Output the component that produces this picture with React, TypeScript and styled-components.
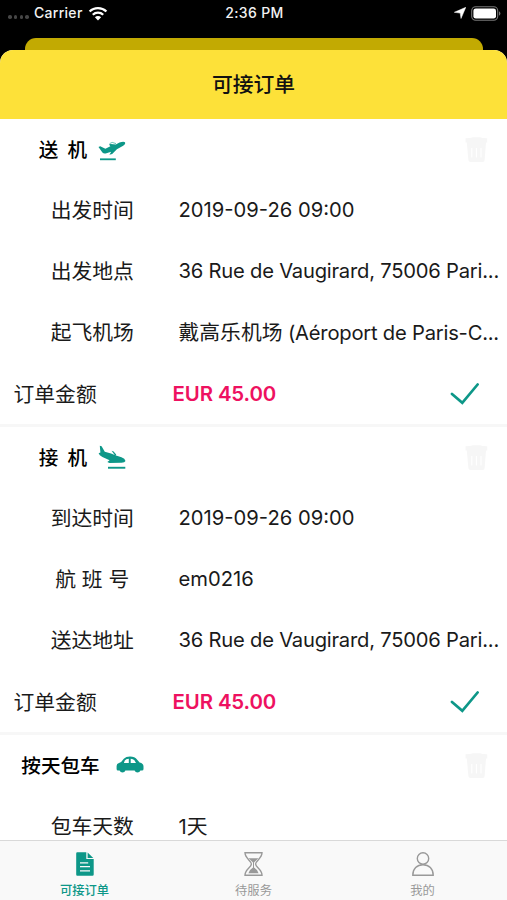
import React from 'react';
import styled, { createGlobalStyle } from 'styled-components';

const colors = {
  teal: '#0d9788',
  yellow: '#fde139',
  darkYellow: '#c2aa02',
  pink: '#ee1160',
  text: '#1a1a1a',
  gray: '#999999',
  divider: '#f7f7f7',
  trash: '#f6f6f6',
};

const GlobalStyle = createGlobalStyle`
    * {
        box-sizing: border-box;
    }

    body {
        margin: 0;
        background: #000;
        font-family: Inter, 'Noto Sans CJK SC', sans-serif;
        color: ${colors.text};
    }
`;

const Screen = styled.div`
    display: flex;
    flex-direction: column;
    width: 507px;
    height: 900px;
    overflow: hidden;
    background: #000;
`;

const StatusBar = styled.div`
    display: grid;
    grid-template-columns: 1fr auto 1fr;
    align-items: center;
    height: 38px;
    flex: none;
    padding: 0 6px 12px 8px;
    color: #f2f2f2;
    font-size: 14px;
    font-weight: 500;
    line-height: 26px;
`;

const StatusGroup = styled.div<{ $end?: boolean }>`
    display: flex;
    align-items: center;
    justify-content: ${props => props.$end ? 'flex-end' : 'flex-start'};
    gap: 5px;
`;

const Signal = styled.div`
    display: flex;
    gap: 2.2px;
    padding-top: 8px;
`;

const SignalDot = styled.i`
    width: 3.6px;
    height: 3.6px;
    border-radius: 50%;
    background: #464646;
`;

const StatusText = styled.span<{ $spacing: number }>`
    letter-spacing: ${props => props.$spacing}px;
`;

const BackCard = styled.div`
    flex: none;
    height: 12px;
    margin: 0 24px 0 25px;
    border-radius: 11px 11px 0 0;
    background: ${colors.darkYellow};
`;

const Card = styled.div`
    display: flex;
    flex-direction: column;
    flex: 1;
    min-height: 0;
    border-radius: 13px 13px 0 0;
    overflow: hidden;
    background: #fff;
`;

const Header = styled.header`
    display: flex;
    align-items: center;
    justify-content: center;
    flex: none;
    height: 68.5px;
    padding-bottom: 2px;
    background: ${colors.yellow};
    color: #111;
    font-size: 20.8px;
    font-weight: 500;
`;

const OrderList = styled.main`
    flex: 1;
    min-height: 0;
    overflow: hidden;
`;

const Order = styled.section`
    border-bottom: 3px solid ${colors.divider};
`;

const Row = styled.div`
    display: flex;
    align-items: center;
    height: 61px;
    white-space: nowrap;
    font-size: 20.8px;
`;

const OrderType = styled.div<{ $gap: number }>`
    display: flex;
    align-items: center;
    justify-content: center;
    gap: ${props => props.$gap}px;
    width: 165px;
    color: #000;
    font-size: 19.6px;
    font-weight: 500;
    white-space: pre;
`;

const TypeName = styled.span`
    padding-bottom: 2px;
    word-spacing: -0.6px;
`;

const TrashButton = styled.button`
    display: flex;
    margin-left: auto;
    margin-right: 19px;
    padding: 0;
    border: none;
    background: none;
`;

const FieldLabel = styled.div`
    flex: none;
    width: 178.5px;
    padding: 0 7px 2px 13px;
    text-align: center;
    white-space: pre;
`;

const FieldValue = styled.div<{ $spacing: number }>`
    padding-bottom: 2px;
    font-size: 20.2px;
    letter-spacing: ${props => props.$spacing}px;
`;

const ChineseText = styled.span`
    font-size: 20.8px;
    letter-spacing: 0;
`;

const AmountLabel = styled.div`
    width: 172.5px;
    padding-left: 13.5px;
`;

const Amount = styled.div`
    color: ${colors.pink};
    font-size: 20.4px;
    font-weight: 600;
    letter-spacing: -0.1px;
`;

const AcceptButton = styled.button`
    display: flex;
    margin-left: auto;
    margin-right: 28px;
    padding: 0;
    border: none;
    background: none;
`;

const TabBar = styled.nav`
    display: grid;
    grid-template-columns: repeat(3, 1fr);
    flex: none;
    height: 60px;
    border-top: 1px solid #d9d9d9;
    background: #f9f9f9;
`;

const Tab = styled.div<{ $active?: boolean }>`
    display: flex;
    flex-direction: column;
    align-items: center;
    padding-top: 11px;
    color: ${props => props.$active ? colors.teal : colors.gray};
    font-size: 12.3px;
    font-weight: ${props => props.$active ? 500 : 400};
    line-height: 18px;

    svg {
        margin-bottom: 6px;
    }
`;

const WifiIcon = () => (
  <svg width="20" height="15" viewBox="0 0 20 15" fill="none" stroke="#fff" strokeWidth="2.3">
    <path d="M1.6 5.5A12 12 0 0 1 18.4 5.5" />
    <path d="M4.8 8.8A7.4 7.4 0 0 1 15.2 8.8" />
    <path d="M10 14.4L6.9 11.3A4.4 4.4 0 0 1 13.1 11.3Z" fill="#fff" stroke="none" />
  </svg>
);

const LocationIcon = () => (
  <svg width="12" height="12" viewBox="0 0 12 12">
    <path d="M11.8 .3L7 11.5L6.2 6.1L.3 5.3Z" fill="#fff" stroke="#fff" strokeWidth=".5" />
  </svg>
);

const BatteryIcon = () => (
  <svg width="30" height="15" viewBox="0 0 30 15">
    <rect x=".7" y=".7" width="26" height="13.6" rx="4" fill="none" stroke="#777" strokeWidth="1.1" />
    <rect x="2.4" y="2.4" width="22.6" height="10.2" rx="2.4" fill="#fff" />
    <path d="M28 5.2Q29.4 6 29.4 7.5T28 9.8Z" fill="#777" />
  </svg>
);

const DepartureIcon = () => (
  <svg width="28" height="26" viewBox="0 -4 28 26" fill={colors.teal}>
    <path d="M.5 7L2.2 6.3L7.4 8.7L12.4 6.3L11 4.4L12.6 3.9L17.8 4.6L21.5 2.6Q25.5 1.2 27 2.2Q28 4.2 24.3 6.3L18.9 9.2L14.2 14L11.4 14.7L13.2 11.8L7.6 13.4Q5.7 13.8 4.4 12.5Z" />
    <path d="M11.6 3.6L14.2 2.4L18 3.6" fill="none" stroke={colors.teal} strokeWidth=".6" />
    <rect x="2" y="18.4" width="15.8" height="1.8" />
  </svg>
);

const ArrivalIcon = () => (
  <svg width="28" height="25" viewBox="0 0 28 25" fill={colors.teal}>
    <path d="M1.8 .8L3.6 1.2L6.8 6.8L13 8.6L18 10.6L23.5 12.3Q27 13.6 27.5 16Q26.8 18 22.8 17.8L11.5 18L9.3 17L11.6 15.2L4.4 12Q1.2 10.2 .6 8.2L2.4 7.4Z" />
    <path d="M13.6 5.8L15.6 6.5L18.2 9.6L17.4 10.9L15.6 8.6Z" />
    <rect x="10" y="21.8" width="17.3" height="1.9" />
  </svg>
);

const CarIcon = () => (
  <svg width="28" height="18" viewBox="0 0 28 18">
    <path
      fill={colors.teal}
      fillRule="evenodd"
      d="M3 6.9Q5.6 6.4 7.8 2.8Q10 .6 14 .6Q18.8 .6 21.2 3.8L23.6 6.6Q27.5 7.4 27.5 10.5V13Q27.5 14.6 26 14.6H24.4A3.1 3.1 0 0 1 18.6 14.6H9.4A3.1 3.1 0 0 1 3.6 14.6H2Q.6 14.6 .6 13V10Q.6 7.4 3 6.9ZM7.9 7H12.8V2.7Q9.8 2.7 8.8 4.4ZM14.7 7H20L18.4 4.3Q17.2 2.8 14.7 2.7Z"
    />
  </svg>
);

const TrashIcon = () => (
  <svg width="23" height="27" viewBox="0 0 23 27">
    <path d="M.6 2.2Q5.5 2 8 1.2H15Q17 2 22.2 2.2V6.5H21L19.6 24.3Q19.5 26 17.8 26H5.5Q3.8 26 3.4 24.3L1.8 6.5H.6Z" fill={colors.trash} />
    <path d="M6.8 12V21.5M11.4 12V21.5M16 12V21.5" stroke="#fff" strokeWidth="1.1" />
  </svg>
);

const CheckIcon = () => (
  <svg width="29" height="23" viewBox="0 0 29 23" fill="none" stroke={colors.teal} strokeWidth="2.7">
    <path d="M2 11.9L12.3 20.8L27.6 2.5" strokeLinecap="round" />
  </svg>
);

const DocumentIcon = () => (
  <svg width="18" height="24" viewBox="0 0 18 24">
    <path d="M1.2 .2H10.3V7.1H17.7V22.6Q17.7 23.8 16.5 23.8H1.2Q.2 23.8 .2 22.6V1.4Q.2 .2 1.2 .2Z" fill={colors.teal} />
    <path d="M11.6 .5L17.3 6H11.6Z" fill={colors.teal} />
    <path d="M4 10.8H12.2M4 14.6H14M4 18.8H14" stroke="#f9f9f9" strokeWidth="1.2" />
  </svg>
);

const HourglassIcon = () => (
  <svg width="19" height="24" viewBox="0 0 19 24" fill="none" stroke={colors.gray} strokeWidth="1.4">
    <path d="M1 .8H18C18 6.5 11.6 8.6 11.6 12S18 17.5 18 23.2H1C1 17.5 7.4 15.4 7.4 12S1 6.5 1 .8Z" />
    <path d="M4.6 6.2H14.4L10 10.4V15.6Q13.4 17.6 14.6 21.2H4.4Q5.6 17.6 9 15.6V10.4Z" fill={colors.gray} stroke="none" />
  </svg>
);

const PersonIcon = () => (
  <svg width="22" height="24" viewBox="0 0 22 24" fill="none" stroke={colors.gray} strokeWidth="1.4">
    <circle cx="11" cy="6.5" r="5.7" />
    <path d="M.8 23.2C.8 16.6 5 12.8 11 12.8S21.2 16.6 21.2 23.2Z" />
  </svg>
);

interface Field {
  label: string;
  value: React.ReactNode;
  spacing?: number;
}

interface OrderData {
  type: string;
  gap: number;
  icon: React.ReactNode;
  fields: Field[];
  amount?: string;
}

const ADDRESS = '36 Rue de Vaugirard, 75006 Pari...';

const ORDERS: OrderData[] = [
  {
    type: '送  机',
    gap: 11,
    icon: <DepartureIcon />,
    fields: [
      { label: '出发时间', value: '2019-09-26 09:00' },
      { label: '出发地点', value: ADDRESS, spacing: -0.22 },
      {
        label: '起飞机场',
        value: <><ChineseText>戴高乐机场</ChineseText> (Aéroport de Paris-C...</>,
        spacing: -0.22,
      },
    ],
    amount: 'EUR 45.00',
  },
  {
    type: '接  机',
    gap: 11,
    icon: <ArrivalIcon />,
    fields: [
      { label: '到达时间', value: '2019-09-26 09:00' },
      { label: '航 班 号', value: 'em0216' },
      { label: '送达地址', value: ADDRESS, spacing: -0.22 },
    ],
    amount: 'EUR 45.00',
  },
  {
    type: '按天包车',
    gap: 16,
    icon: <CarIcon />,
    fields: [
      { label: '包车天数', value: <>1<ChineseText>天</ChineseText></> },
    ],
  },
];

const OrderCard: React.FC<{ order: OrderData }> = ({ order }) => (
  <Order>
    <Row>
      <OrderType $gap={order.gap}>
        <TypeName>{order.type}</TypeName>
        {order.icon}
      </OrderType>
      <TrashButton title="删除">
        <TrashIcon />
      </TrashButton>
    </Row>
    {order.fields.map(field => (
      <Row key={field.label}>
        <FieldLabel>{field.label}</FieldLabel>
        <FieldValue $spacing={field.spacing ?? 0}>{field.value}</FieldValue>
      </Row>
    ))}
    {order.amount && (
      <Row>
        <AmountLabel>订单金额</AmountLabel>
        <Amount>{order.amount}</Amount>
        <AcceptButton title="接单">
          <CheckIcon />
        </AcceptButton>
      </Row>
    )}
  </Order>
);

const App = () => (
  <Screen>
    <GlobalStyle />
    <StatusBar>
      <StatusGroup>
        <Signal>
          {[0, 1, 2, 3].map(dot => <SignalDot key={dot} />)}
        </Signal>
        <StatusText $spacing={0.3}>Carrier</StatusText>
        <WifiIcon />
      </StatusGroup>
      <StatusText $spacing={0.35}>2:36 PM</StatusText>
      <StatusGroup $end>
        <LocationIcon />
        <BatteryIcon />
      </StatusGroup>
    </StatusBar>
    <BackCard />
    <Card>
      <Header>可接订单</Header>
      <OrderList>
        {ORDERS.map(order => <OrderCard key={order.type} order={order} />)}
      </OrderList>
      <TabBar>
        <Tab $active>
          <DocumentIcon />
          可接订单
        </Tab>
        <Tab>
          <HourglassIcon />
          待服务
        </Tab>
        <Tab>
          <PersonIcon />
          我的
        </Tab>
      </TabBar>
    </Card>
  </Screen>
);

export default App;
